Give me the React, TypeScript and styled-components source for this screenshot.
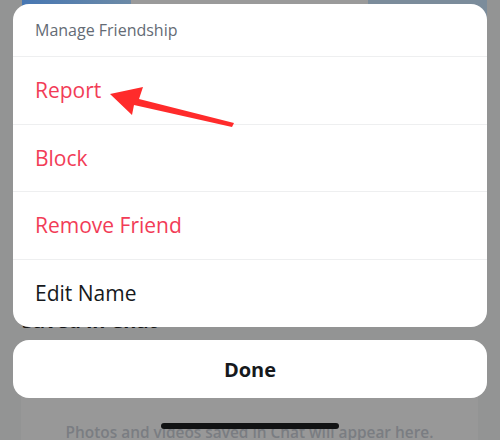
import React from "react";
import styled, { createGlobalStyle } from "styled-components";

const Global = createGlobalStyle`
  html, body { margin: 0; padding: 0; background: #939494; }
  * { box-sizing: border-box; }
`;

const Screen = styled.div`
  position: relative;
  width: 500px;
  height: 440px;
  overflow: hidden;
  background: #939494;
  font-family: "Open Sans", "Noto Sans", sans-serif;
`;

/* background page (dimmed) */
const Backdrop = styled.div`
  display: flex;
  flex-direction: column;
`;

const TopStrip = styled.div`
  display: flex;
  height: 20px;
  padding-left: 22px;
`;

const Tile = styled.div<{ $w: number; $bg: string }>`
  width: ${(p) => p.$w}px;
  height: 100%;
  background: ${(p) => p.$bg};
`;

const SectionTitle = styled.div`
  margin-top: 289px;
  padding-left: 22px;
  font-size: 20px;
  line-height: 24px;
  font-weight: 700;
  color: #121314;
`;

const Panel = styled.div`
  margin: 47px 22px 0 21px;
  height: 120px;
  border-radius: 12px;
  background: #989898;
  padding-top: 43px;
  text-align: center;
  font-size: 15.4px;
  line-height: 20px;
  font-weight: 600;
  color: #7a7d82;
  white-space: nowrap;
`;

/* action sheet overlay */
const Sheet = styled.div`
  position: absolute;
  top: 4px;
  left: 13px;
  width: 474px;
  display: flex;
  flex-direction: column;
  gap: 13px;
`;

const Card = styled.div`
  background: #ffffff;
  border-radius: 16px;
  overflow: hidden;
  display: flex;
  flex-direction: column;
`;

const HeaderRow = styled.div`
  height: 53px;
  display: flex;
  align-items: center;
  padding: 0 22px;
  border-bottom: 1px solid #eeeff0;
  font-size: 16px;
  color: #646b75;
`;

const ActionRow = styled.div<{ $danger?: boolean }>`
  height: 67.5px;
  display: flex;
  align-items: center;
  padding: 0 22px;
  font-size: 21px;
  color: ${(p) => (p.$danger ? "#f23c57" : "#16191c")};
  border-bottom: 1px solid #eeeff0;
  &:last-child { border-bottom: none; }
`;

const DoneButton = styled.div`
  height: 58px;
  background: #ffffff;
  border-radius: 16px;
  display: flex;
  align-items: center;
  justify-content: center;
  font-size: 20px;
  font-weight: 700;
  color: #16191c;
`;

const HomeIndicator = styled.div`
  position: absolute;
  left: 161px;
  top: 423px;
  width: 178px;
  height: 6px;
  border-radius: 3px;
  background: #111213;
`;

const Arrow = styled.svg`
  position: absolute;
  left: 100px;
  top: 80px;
  width: 140px;
  height: 50px;
`;

const rows: { label: string; danger?: boolean }[] = [
  { label: "Report", danger: true },
  { label: "Block", danger: true },
  { label: "Remove Friend", danger: true },
  { label: "Edit Name" },
];

export default function App() {
  return (
    <Screen>
      <Global />
      <Backdrop>
        <TopStrip>
          <Tile $w={109} $bg="linear-gradient(90deg,#4777b3,#6c8aa6)" />
          <Tile $w={237} $bg="#9a9a9a" />
          <Tile $w={119} $bg="#7b8c9b" />
        </TopStrip>
        <SectionTitle>Saved in Chat</SectionTitle>
        <Panel>Photos and videos saved in Chat will appear here.</Panel>
      </Backdrop>

      <Sheet>
        <Card>
          <HeaderRow>Manage Friendship</HeaderRow>
          {rows.map((r) => (
            <ActionRow key={r.label} $danger={r.danger}>
              {r.label}
            </ActionRow>
          ))}
        </Card>
        <DoneButton>Done</DoneButton>
      </Sheet>

      <Arrow viewBox="100 80 140 50">
        <polygon
          points="110,94 143,87 139,99 234,123 232,127 134,105 132,115"
          fill="#ff2b2b"
        />
      </Arrow>

      <HomeIndicator />
    </Screen>
  );
}
